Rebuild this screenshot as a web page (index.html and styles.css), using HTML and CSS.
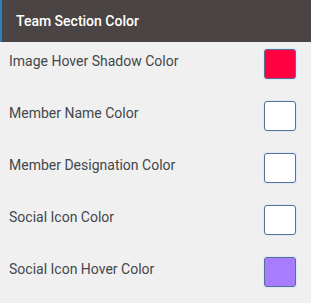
FILE: index.html
```html
<!DOCTYPE html>
<html lang="en">
<head>
    <meta charset="UTF-8">
    <meta name="viewport" content="width=device-width, initial-scale=1.0">
    <title>Team Section Color</title>
    <link rel="stylesheet" href="styles.css">
</head>
<body>
    <div class="panel">
        <div class="panel-title">Team Section Color</div>

        <div class="color-row">
            <label class="color-label">Image Hover Shadow Color</label>
            <span class="swatch" style="background: #ff0040;"></span>
        </div>
        <div class="color-row">
            <label class="color-label">Member Name Color</label>
            <span class="swatch" style="background: #ffffff;"></span>
        </div>
        <div class="color-row">
            <label class="color-label">Member Designation Color</label>
            <span class="swatch" style="background: #ffffff;"></span>
        </div>
        <div class="color-row">
            <label class="color-label">Social Icon Color</label>
            <span class="swatch" style="background: #ffffff;"></span>
        </div>
        <div class="color-row">
            <label class="color-label">Social Icon Hover Color</label>
            <span class="swatch" style="background: #a77cff;"></span>
        </div>
    </div>
</body>
</html>
```

FILE: styles.css
```css
body {
    margin: 0;
    background-color: #f0f0f0;
    font-family: Roboto, "Noto Sans", Arial, sans-serif;
}
.panel {
    width: 311px;
}
.panel-title {
    height: 42px;
    line-height: 42px;
    background: #4a4544;
    border-left: 2px solid #2d7fc1;
    padding-left: 14px;
    color: #ffffff;
    font-size: 14px;
    font-weight: 500;
}
.color-row {
    display: flex;
    justify-content: space-between;
    align-items: flex-start;
    height: 52px;
    padding: 7px 15px 0 9px;
    box-sizing: border-box;
}
.color-label {
    font-size: 14px;
    color: #43474d;
    margin-top: 4px;
}
.swatch {
    width: 30px;
    height: 28px;
    border: 1px solid #5a6f96;
    border-radius: 3px;
    box-shadow: 0 0 0 1px rgba(200, 225, 255, 0.5);
}
```
